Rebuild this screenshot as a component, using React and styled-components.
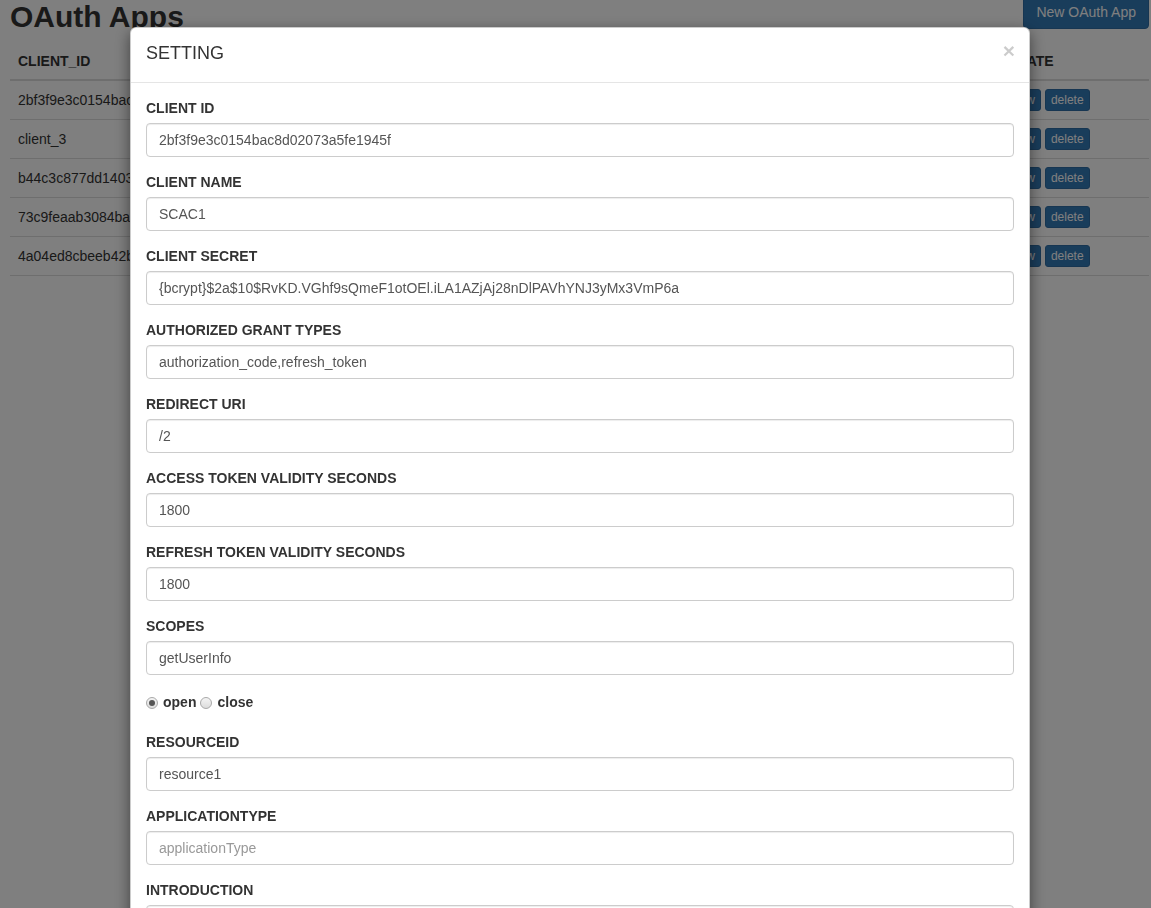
import styled, { createGlobalStyle } from "styled-components";

const GlobalStyle = createGlobalStyle`
  html, body {
    margin: 0;
    height: 100%;
    overflow: hidden;
    background: #fff;
    font-family: "Liberation Sans", Arial, sans-serif;
    font-size: 14px;
    line-height: 1.42857;
    color: #333;
  }
  * { box-sizing: border-box; }
`;

const apps = [
  { id: "2bf3f9e3c0154bac8d02073a5fe1945f", name: "SCAC1", grant: "authorization_code,refresh_token" },
  { id: "client_3", name: "client_3", grant: "password" },
  { id: "b44c3c877dd1403a9c1f7e2b6d05a8e4", name: "client_4", grant: "client_credentials" },
  { id: "73c9feaab3084ba6b21d9c4e0f57a1c2", name: "client_5", grant: "authorization_code" },
  { id: "4a04ed8cbeeb42b1a7f3e9d26c8b50f1", name: "client_6", grant: "implicit" },
];

const fields = [
  { label: "CLIENT ID", value: "2bf3f9e3c0154bac8d02073a5fe1945f" },
  { label: "CLIENT NAME", value: "SCAC1" },
  { label: "CLIENT SECRET", value: "{bcrypt}$2a$10$RvKD.VGhf9sQmeF1otOEl.iLA1AZjAj28nDlPAVhYNJ3yMx3VmP6a" },
  { label: "AUTHORIZED GRANT TYPES", value: "authorization_code,refresh_token" },
  { label: "REDIRECT URI", value: "/2" },
  { label: "ACCESS TOKEN VALIDITY SECONDS", value: "1800" },
  { label: "REFRESH TOKEN VALIDITY SECONDS", value: "1800" },
  { label: "SCOPES", value: "getUserInfo" },
];

const moreFields = [
  { label: "RESOURCEID", value: "resource1" },
  { label: "APPLICATIONTYPE", placeholder: "applicationType" },
  { label: "INTRODUCTION", placeholder: "introduction" },
];

const App = () => {
  return (
    <>
      <GlobalStyle />
      <Page>
        <TopBar>
          <Title>OAuth Apps</Title>
          <Button>New OAuth App</Button>
        </TopBar>
        <Table>
          <colgroup>
            <col style={{ width: 300 }} />
            <col style={{ width: 300 }} />
            <col style={{ width: 369 }} />
            <col style={{ width: 170 }} />
          </colgroup>
          <thead>
            <tr>
              <Th>CLIENT_ID</Th>
              <Th>CLIENT_NAME</Th>
              <Th>GRANT_TYPES</Th>
              <Th>OPERATE</Th>
            </tr>
          </thead>
          <tbody>
            {apps.map((a) => (
              <tr key={a.id}>
                <Td>{a.id}</Td>
                <Td>{a.name}</Td>
                <Td>{a.grant}</Td>
                <Td $indent>
                  <SmallButton>view</SmallButton> <SmallButton>delete</SmallButton>
                </Td>
              </tr>
            ))}
          </tbody>
        </Table>
      </Page>

      <Backdrop />
      <ModalLayer>
        <Dialog>
          <Header>
            <ModalTitle>SETTING</ModalTitle>
            <Close>×</Close>
          </Header>
          <Body>
            {fields.map((f) => (
              <Group key={f.label}>
                <Label>{f.label}</Label>
                <Input defaultValue={f.value} />
              </Group>
            ))}
            <RadioRow>
              <RadioLabel>
                <Radio type="radio" name="state" defaultChecked /> open
              </RadioLabel>
              <RadioLabel>
                <Radio type="radio" name="state" /> close
              </RadioLabel>
            </RadioRow>
            {moreFields.map((f) => (
              <Group key={f.label}>
                <Label>{f.label}</Label>
                <Input defaultValue={f.value} placeholder={f.placeholder} />
              </Group>
            ))}
          </Body>
        </Dialog>
      </ModalLayer>
    </>
  );
};

const Page = styled.div`
  margin-top: -5px;
  padding: 0 2px 0 10px;
`;

const TopBar = styled.div`
  display: flex;
  justify-content: space-between;
  align-items: flex-start;
  height: 48px;
`;

const Title = styled.h1`
  margin: 0;
  font-size: 30px;
  line-height: 43px;
  font-weight: bold;
`;

const Button = styled.button`
  font-family: inherit;
  font-size: 14px;
  line-height: 20px;
  padding: 6px 12px;
  color: #fff;
  background: #337ab7;
  border: 1px solid #2e6da4;
  border-radius: 4px;
`;

const Table = styled.table`
  width: 100%;
  table-layout: fixed;
  border-collapse: collapse;
`;

const Th = styled.th`
  text-align: left;
  padding: 8px;
  line-height: 20px;
  border-bottom: 2px solid #ddd;
  white-space: nowrap;
  overflow: hidden;
`;

const Td = styled.td`
  padding: 8px 8px 8px ${(p) => (p.$indent ? "26px" : "8px")};
  line-height: 20px;
  border-bottom: 1px solid #ddd;
  white-space: nowrap;
  overflow: hidden;
  height: 39px;
`;

const SmallButton = styled.button`
  font-family: inherit;
  font-size: 12px;
  line-height: 18px;
  padding: 1px 5px;
  color: #fff;
  background: #337ab7;
  border: 1px solid #2e6da4;
  border-radius: 3px;
`;

const Backdrop = styled.div`
  position: fixed;
  inset: 0;
  background: rgba(0, 0, 0, 0.5);
`;

const ModalLayer = styled.div`
  position: fixed;
  inset: 0;
  overflow: hidden;
`;

const Dialog = styled.div`
  width: 900px;
  margin: 27px 0 0 130px;
  background: #fff;
  border: 1px solid rgba(0, 0, 0, 0.2);
  border-radius: 6px;
  box-shadow: 0 5px 15px rgba(0, 0, 0, 0.5);
`;

const Header = styled.div`
  display: flex;
  justify-content: space-between;
  align-items: center;
  padding: 13px 15px 17px;
  border-bottom: 1px solid #e5e5e5;
`;

const ModalTitle = styled.h4`
  margin: 0;
  font-size: 18px;
  font-weight: normal;
  line-height: 24px;
`;

const Close = styled.span`
  font-size: 21px;
  font-weight: bold;
  line-height: 1;
  color: #000;
  opacity: 0.2;
  margin: -6px -1px 0 0;
`;

const Body = styled.div`
  padding: 15px;
`;

const Group = styled.div`
  margin-bottom: 15px;
`;

const Label = styled.label`
  display: block;
  margin-bottom: 5px;
  font-weight: bold;
  line-height: 20px;
`;

const Input = styled.input`
  display: block;
  width: 100%;
  height: 34px;
  padding: 6px 12px;
  font-family: inherit;
  font-size: 14px;
  line-height: 20px;
  color: #555;
  background: #fff;
  border: 1px solid #ccc;
  border-radius: 4px;
  box-shadow: inset 0 1px 1px rgba(0, 0, 0, 0.075);
  &::placeholder { color: #999; }
`;

const RadioRow = styled.div`
  display: flex;
  align-items: center;
  height: 22px;
  margin: 0 0 20px;
  padding-top: 4px;
`;

const RadioLabel = styled.label`
  display: flex;
  align-items: center;
  gap: 5px;
  font-weight: bold;
  margin-right: 4px;
`;

const Radio = styled.input`
  appearance: none;
  margin: 0;
  width: 12px;
  height: 12px;
  border-radius: 50%;
  border: 1px solid #a9a9a9;
  background: linear-gradient(#f4f4f4, #dcdcdc);
  position: relative;
  &:checked::after {
    content: "";
    position: absolute;
    left: 2px;
    top: 2px;
    width: 6px;
    height: 6px;
    border-radius: 50%;
    background: #555;
  }
`;

export default App;
